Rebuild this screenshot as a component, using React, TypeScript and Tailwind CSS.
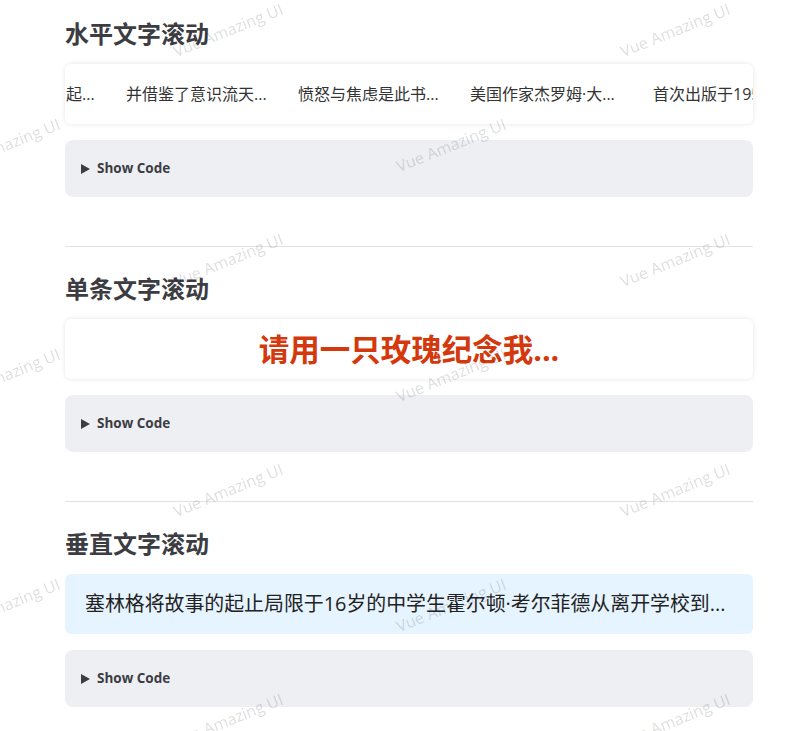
import { FC, ReactNode } from "react";

const font = { fontFamily: '"Open Sans", "Noto Sans CJK SC", sans-serif' };

// watermark tiles: rows every 115px, alternating column offset
const marks: { x: number; y: number }[] = [];
for (let r = 0; r < 7; r++) {
  const y = 30 + r * 115;
  const xs = r % 2 === 0 ? [228, 675] : [5, 451];
  xs.forEach((x) => marks.push({ x, y }));
}

const ShowCode: FC = () => (
  <div className="flex h-[57px] items-center rounded-lg bg-[#eeeff2] pl-4 text-[#3c3c43]">
    <svg width="9" height="10" viewBox="0 0 9 10" className="mr-[7px]">
      <path d="M0 0 L9 5 L0 10 Z" fill="#3c3c43" />
    </svg>
    <span className="text-[13.5px] font-bold">Show Code</span>
  </div>
);

const Section: FC<{ title: string; first?: boolean; children: ReactNode }> = ({
  title,
  first,
  children,
}) => (
  <section
    className={
      first ? "pt-[18px]" : "mt-[49px] border-t border-[#e2e2e3] pt-[26px]"
    }
  >
    <h2 className="mb-[14px] text-2xl leading-8 font-bold text-[#3c3c43]">
      {title}
    </h2>
    {children}
    <div className="mt-4">
      <ShowCode />
    </div>
  </section>
);

export default function App() {
  return (
    <div className="relative min-h-[731px] overflow-hidden bg-white" style={font}>
      <div className="ml-[65px] w-[688px]">
        <Section title="水平文字滚动" first>
          <div className="flex h-[60px] items-center overflow-hidden rounded-md bg-white text-base text-[#333] shadow-[0_0_5px_rgba(0,0,0,0.1)] whitespace-nowrap">
            <span className="ml-px w-[60px] shrink-0">起...</span>
            <span className="w-[172px] shrink-0">并借鉴了意识流天...</span>
            <span className="w-[172px] shrink-0">愤怒与焦虑是此书...</span>
            <span className="w-[183px] shrink-0">美国作家杰罗姆·大...</span>
            <span className="shrink-0">首次出版于1951年</span>
          </div>
        </Section>

        <Section title="单条文字滚动">
          <div className="flex h-[60px] items-center justify-center rounded-md bg-white shadow-[0_0_5px_rgba(0,0,0,0.1)]">
            <span className="text-[30.5px] leading-none font-bold text-[#d4380d]">
              请用一只玫瑰纪念我...
            </span>
          </div>
        </Section>

        <Section title="垂直文字滚动">
          <div className="flex h-[60px] items-center rounded-md bg-[#e6f4ff] px-5 text-[19.9px] text-[#222]">
            <span className="whitespace-nowrap">
              塞林格将故事的起止局限于16岁的中学生霍尔顿·考尔菲德从离开学校到...
            </span>
          </div>
        </Section>
      </div>

      {/* watermark layer */}
      <div className="pointer-events-none absolute inset-0">
        {marks.map((m, i) => (
          <span
            key={i}
            className="absolute -translate-x-1/2 -translate-y-1/2 rotate-[-22deg] text-base whitespace-nowrap text-[rgba(0,0,0,0.15)]"
            style={{ left: m.x, top: m.y }}
          >
            Vue Amazing UI
          </span>
        ))}
      </div>
    </div>
  );
}
